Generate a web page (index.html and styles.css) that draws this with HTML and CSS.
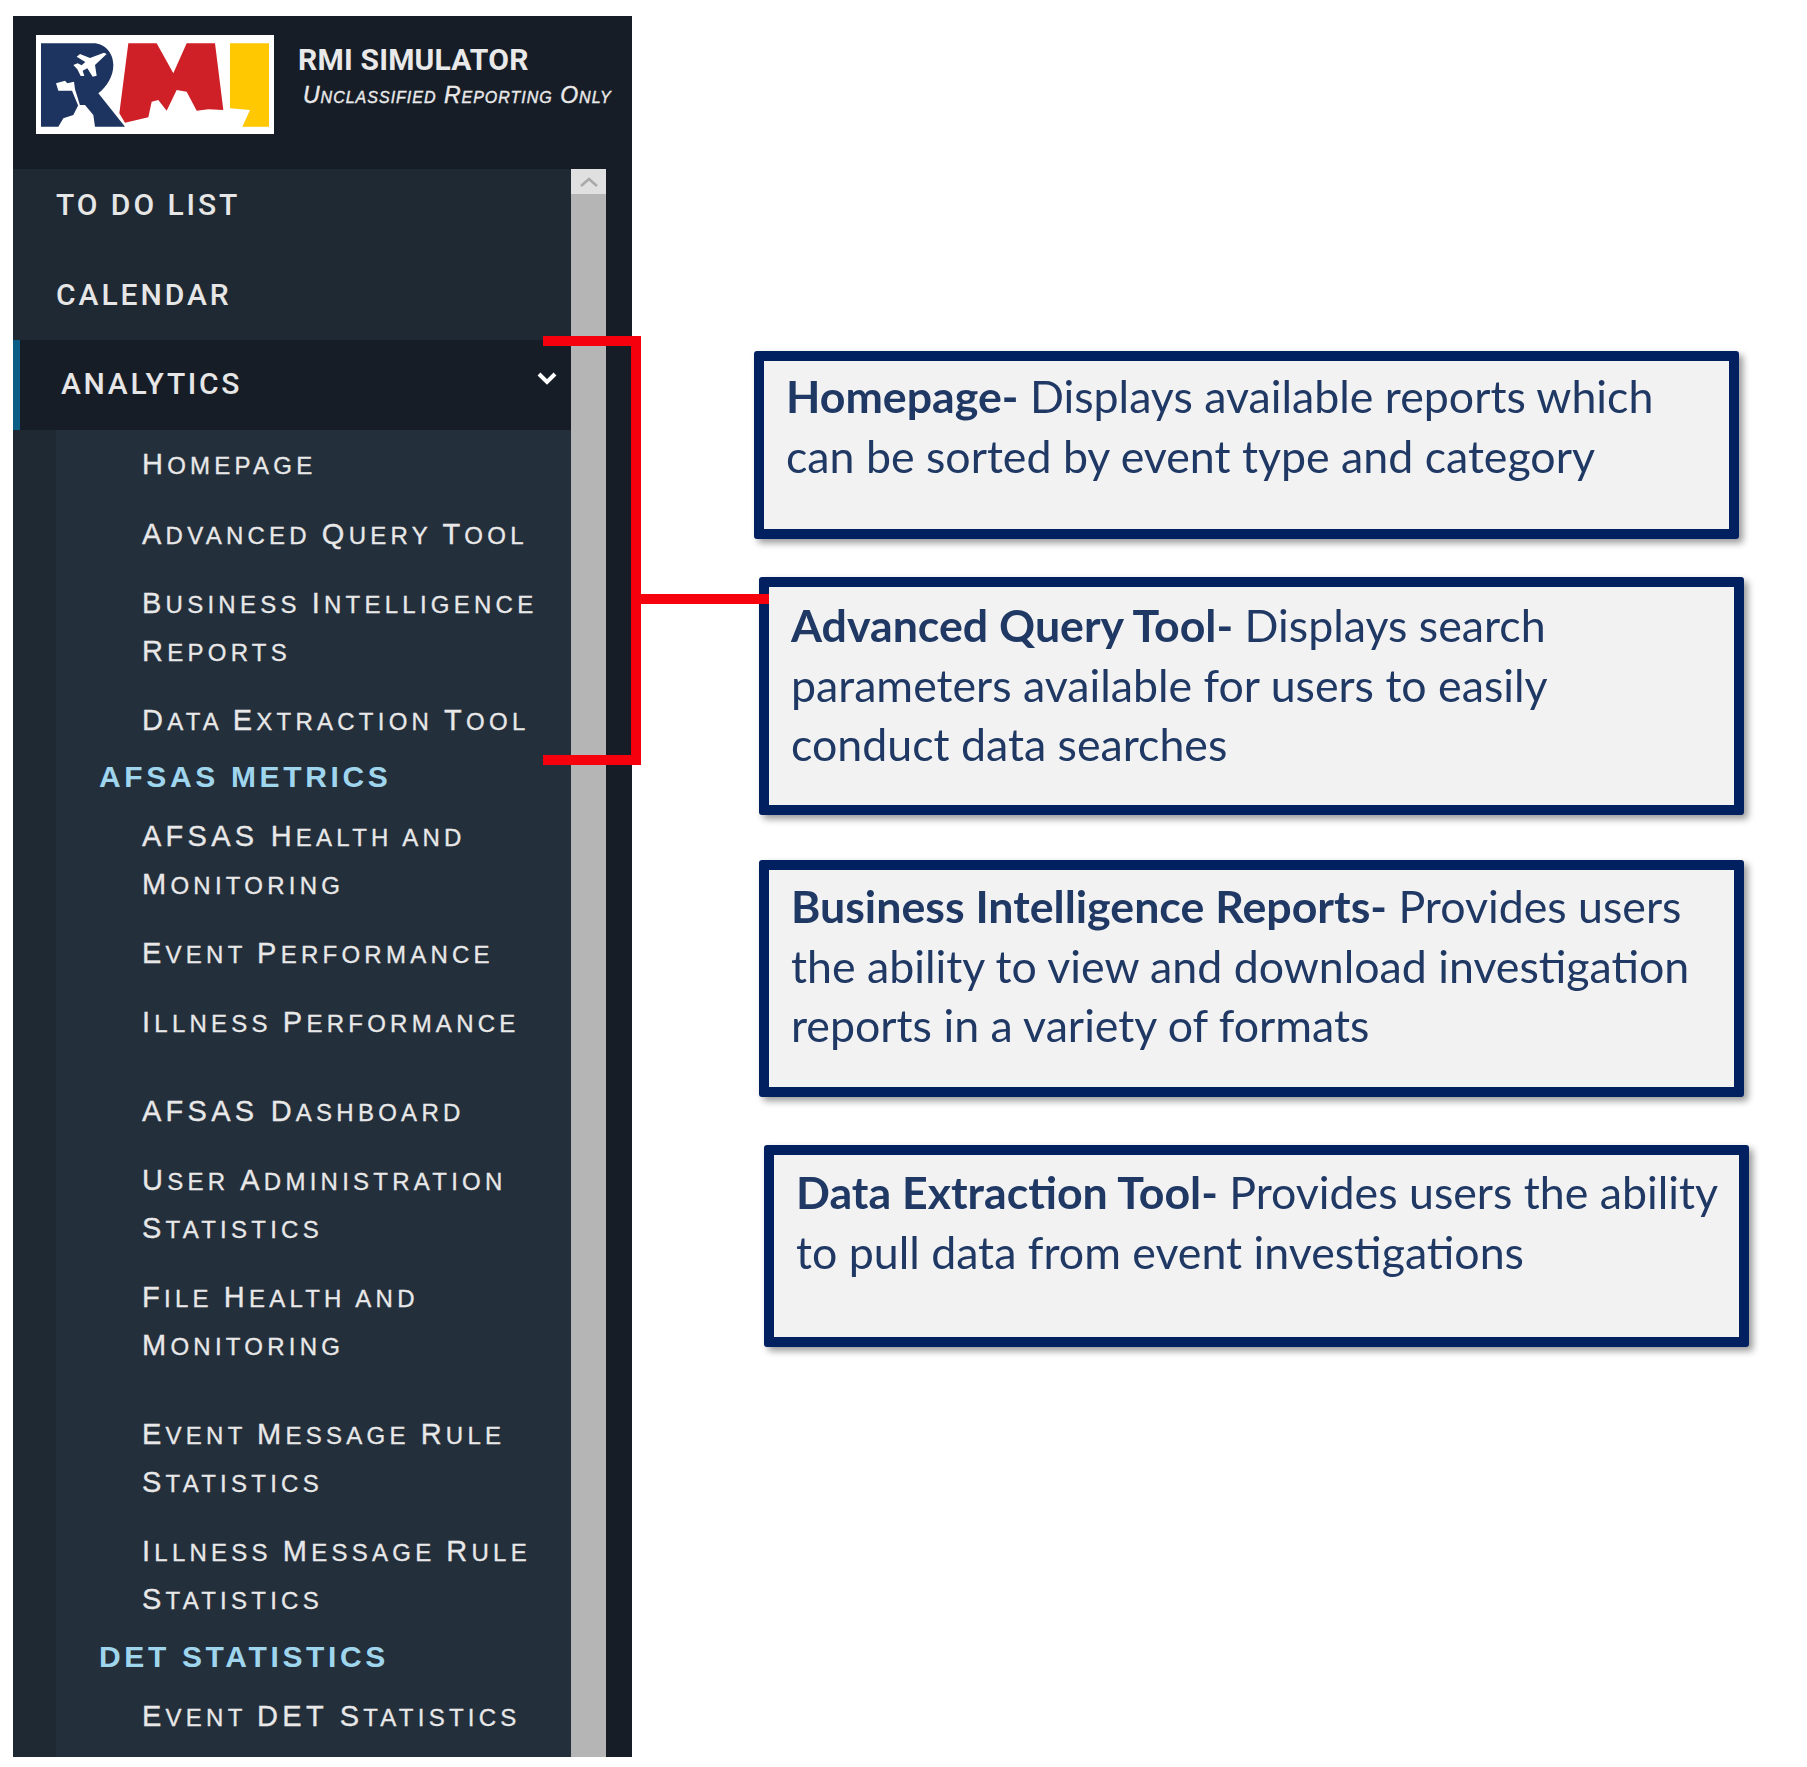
FILE: index.html
```html
<!DOCTYPE html>
<html lang="en">
<head>
<meta charset="utf-8">
<title>RMI Simulator - Analytics</title>
<link rel="stylesheet" href="styles.css">
</head>
<body>
<div class="page">
  <aside class="sidebar">
    <header class="brand">
      <svg class="logo" viewBox="18 15 714 297" aria-label="RMI logo">
        <rect x="18" y="15" width="714" height="297" fill="#fff"/>
        <path fill="#1c345f" d="M33 40H190C225 40 250 70 250 105C250 140 230 170 205 190L285 290H195L190 255L165 225H145L130 255L100 265L85 290H33Z"/>
        <path fill="#fff" d="M222 68L230 72L195 105L200 137L188 140L172 115L158 122L163 138L152 138L142 118L130 105L143 100L155 106L166 96L140 80L150 72L180 84Z"/>
        <path fill="#fff" d="M78 160L105 152L112 160L132 155L135 178L150 226H144L126 182L85 182Z"/>
        <path fill="#cf2027" d="M295 40H380L430 130L470 40H555L580 240L535 238L500 242L470 185L440 180L410 242L385 210L365 215L355 262L285 278L268 250Z"/>
        <path fill="#ffc800" d="M600 40H717V290H637L660 240L600 235Z"/>
      </svg>
      <div class="brand-text">
        <div class="brand-title">RMI SIMULATOR</div>
        <div class="brand-sub">Unclassified Reporting Only</div>
      </div>
    </header>
    <div class="nav-wrap">
      <nav class="nav">
        <a class="top">TO DO LIST</a>
        <a class="top">CALENDAR</a>
        <a class="top top--open">ANALYTICS
          <svg class="chevron" viewBox="0 0 20 14"><path d="M2 3L10 11L18 3" fill="none" stroke="#fff" stroke-width="4"/></svg>
        </a>
        <div class="sub">
          <a class="item item--first"><span class="cap">H</span>omepage</a>
          <a class="item"><span class="cap">A</span>dvanced <span class="cap">Q</span>uery <span class="cap">T</span>ool</a>
          <a class="item"><span class="cap">B</span>usiness <span class="cap">I</span>ntelligence<br><span class="cap">R</span>eports</a>
          <a class="item"><span class="cap">D</span>ata <span class="cap">E</span>xtraction <span class="cap">T</span>ool</a>
          <h3 class="section">AFSAS METRICS</h3>
          <a class="item item--after"><span class="cap">AFSAS H</span>ealth and<br><span class="cap">M</span>onitoring</a>
          <a class="item"><span class="cap">E</span>vent <span class="cap">P</span>erformance</a>
          <a class="item"><span class="cap">I</span>llness <span class="cap">P</span>erformance</a>
          <a class="item item--wide"><span class="cap">AFSAS D</span>ashboard</a>
          <a class="item"><span class="cap">U</span>ser <span class="cap">A</span>dministration<br><span class="cap">S</span>tatistics</a>
          <a class="item"><span class="cap">F</span>ile <span class="cap">H</span>ealth and<br><span class="cap">M</span>onitoring</a>
          <a class="item item--wide"><span class="cap">E</span>vent <span class="cap">M</span>essage <span class="cap">R</span>ule<br><span class="cap">S</span>tatistics</a>
          <a class="item"><span class="cap">I</span>llness <span class="cap">M</span>essage <span class="cap">R</span>ule<br><span class="cap">S</span>tatistics</a>
          <h3 class="section section--last">DET STATISTICS</h3>
          <a class="item item--after"><span class="cap">E</span>vent <span class="cap">DET S</span>tatistics</a>
        </div>
      </nav>
      <div class="scrollbar">
        <div class="scroll-btn"><svg viewBox="0 0 20 10"><path d="M2 9L10 2L18 9" fill="none" stroke="#a9a9a9" stroke-width="2.5"/></svg></div>
      </div>
      <div class="rail"></div>
    </div>
  </aside>

  <main class="notes">
    <section class="note note--a"><b>Homepage-</b> Displays available reports which<br>can be sorted by event type and category</section>
    <section class="note note--b"><b>Advanced Query Tool-</b> Displays search<br>parameters available for users to easily<br>conduct data searches</section>
    <section class="note note--c"><b>Business Intelligence Reports-</b> Provides users<br>the ability to view and download investigation<br>reports in a variety of formats</section>
    <section class="note note--d"><b>Data Extraction Tool-</b> Provides users the ability<br>to pull data from event investigations</section>
  </main>

  <div class="bracket"></div>
  <div class="connector"></div>
</div>
</body>
</html>
```
FILE: styles.css
```css
* { box-sizing: border-box; }
html, body { margin: 0; background: #fff; }
.page {
  position: relative;
  display: flex;
  align-items: flex-start;
  width: 1807px;
  height: 1767px;
  padding: 16px 0 0 13px;
  overflow: hidden;
  filter: blur(0.6px);
}

/* Sidebar */
.sidebar {
  display: flex;
  flex-direction: column;
  flex: none;
  width: 619px;
  height: 1741px;
  background: #161d27;
}
.brand {
  display: flex;
  flex: none;
  height: 153px;
  padding: 19px 0 0 23px;
}
.logo {
  display: block;
  width: 238px;
  height: 99px;
  flex: none;
}
.brand-text { margin-left: 24px; color: #e9e9e9; }
.brand-title {
  margin-top: 7px;
  font: 700 30px/36px Roboto, sans-serif;
  letter-spacing: 0.2px;
  white-space: nowrap;
}
.brand-sub {
  margin: 4px 0 0 5px;
  font: italic 400 23px/26px "Liberation Sans", Arial, sans-serif;
  font-variant: small-caps;
  letter-spacing: 1px;
  -webkit-text-stroke: 0.4px #e9e9e9;
  white-space: nowrap;
}
.nav-wrap { display: flex; flex: 1; min-height: 0; }
.nav {
  flex: none;
  width: 558px;
  background: #1f2933;
  overflow: hidden;
}
.top {
  position: relative;
  display: block;
  height: 90px;
  padding-left: 43px;
  font: 500 30px/72px Roboto, sans-serif;
  letter-spacing: 2.95px;
  color: #e6e6e6;
}
.top:nth-child(2) { height: 81px; }
.top--open {
  height: 90px;
  padding-left: 41px;
  background: #161d27;
  border-left: 7px solid #0a5d85;
  line-height: 88px;
  letter-spacing: 2.7px;
}
.chevron {
  position: absolute;
  right: 14px;
  top: 31px;
  width: 20px;
  height: 14px;
}
.sub {
  margin-left: 43px;
  padding: 0 0 0 43px;
  height: 1327px;
  background: #242f3c;
}
.item {
  display: block;
  margin: 21px 0 -2px 43px;
  padding-top: 2px;
  font: 400 24px/48px "Liberation Sans", Arial, sans-serif;
  text-transform: uppercase;
  letter-spacing: 4.25px;
  color: #e8e8e8;
  -webkit-text-stroke: 0.3px #e8e8e8;
  white-space: nowrap;
}
.cap { font-size: 29px; line-height: 0; }
.item--first { margin: 0 0 -1px 43px; padding-top: 12px; }
.item--after { margin-top: 15px; }
.item--wide { margin-top: 41px; }
.section {
  margin: 13px 0 0 0;
  font: 700 30px/40px "Liberation Sans", Arial, sans-serif;
  letter-spacing: 3.65px;
  color: #9fd6ee;
  white-space: nowrap;
}
.section--last { margin-top: 14px; }
.scrollbar {
  flex: none;
  width: 35px;
  background: #b5b5b5;
}
.scroll-btn {
  display: flex;
  align-items: center;
  justify-content: center;
  height: 25px;
  background: #e0e0e0;
}
.scroll-btn svg { width: 20px; height: 10px; }
.rail { flex: 1; }

/* Callouts */
.notes {
  display: flex;
  flex-direction: column;
  align-items: flex-start;
  margin-top: 335px;
}
.note {
  width: 985px;
  padding: 8px 10px 0 22px;
  background: #f2f2f2;
  border: 10px solid #002060;
  border-radius: 3px;
  box-shadow: 4px 4px 7px rgba(0, 0, 0, .4);
  font: 400 44.7px/59.7px Lato, sans-serif;
  color: #1f3864;
  white-space: nowrap;
}
.note b { font-weight: 700; }
.note--a { height: 188px; margin-left: 122px; padding-top: 6px; }
.note--b { height: 238px; margin: 38px 0 0 127px; padding-top: 9px; }
.note--c { height: 237px; margin: 45px 0 0 127px; padding-top: 7px; }
.note--d { height: 202px; margin: 48px 0 0 132px; }

/* Red annotation overlay */
.bracket {
  position: absolute;
  left: 543px;
  top: 336px;
  width: 98px;
  height: 429px;
  border: 10px solid #f5000c;
  border-left: 0;
}
.connector {
  position: absolute;
  left: 641px;
  top: 594px;
  width: 128px;
  height: 10px;
  background: #f5000c;
}
```
